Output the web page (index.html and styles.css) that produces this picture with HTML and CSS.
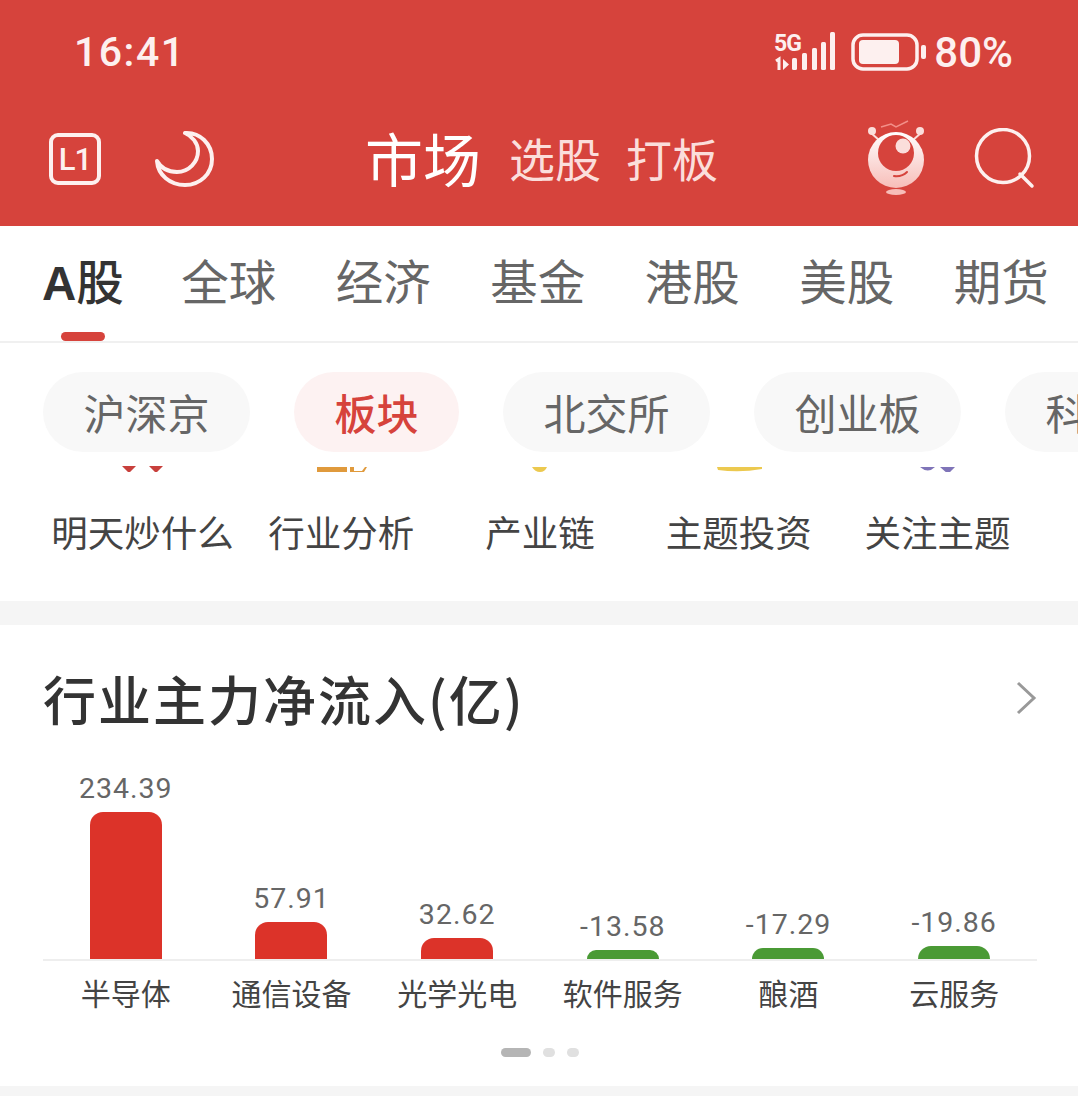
FILE: index.html
```html
<!DOCTYPE html>
<html lang="zh-CN">
<head>
    <meta charset="UTF-8">
    <meta name="viewport" content="width=device-width, initial-scale=1.0">
    <title>市场</title>
    <link rel="stylesheet" href="styles.css">
</head>
<body>
    <main id="app">
        <header id="top">
            <section id="status">
                <p class="clock">16:41</p>
                <div class="status-right">
                    <svg class="signal" width="64" height="40" viewBox="0 0 64 40">
                        <text x="0" y="19" class="net">5G</text>
                        <path d="M2 29l3-2v11" class="updown"/>
                        <path d="M9 27l6 5.500-6 5.500z"/>
                        <rect x="18" y="26" width="5" height="12" rx="1.500"/>
                        <rect x="28" y="21" width="5" height="17" rx="1.500"/>
                        <rect x="38" y="16" width="5" height="22" rx="1.500"/>
                        <rect x="47" y="10" width="5" height="28" rx="1.500"/>
                        <rect x="56" y="0" width="5" height="38" rx="1.500"/>
                    </svg>
                    <svg class="battery" width="76" height="38" viewBox="0 0 76 38">
                        <rect x="2" y="2" width="64" height="34" rx="10" class="shell"/>
                        <rect x="8" y="7" width="40" height="24" rx="4"/>
                        <rect x="70" y="12" width="5" height="14" rx="2"/>
                    </svg>
                    <p class="percent">80%</p>
                </div>
            </section>
            <nav id="bar">
                <svg class="icon-level" width="52" height="52" viewBox="0 0 52 52">
                    <rect x="2" y="2" width="48" height="48" rx="7"/>
                    <text x="26" y="37" class="level">L1</text>
                </svg>
                <svg class="icon-moon" width="60" height="58" viewBox="0 0 60 58">
                    <path d="M30 3C45 2 57 14 57 29C57 44 45 55 30 55C15 55 3 45 2 31C6 38 13 42 22 42C34 42 43 32 43 21C43 13 37 6 30 3Z"/>
                </svg>
                <div class="titles">
                    <span class="title-main">市场</span>
                    <span class="title-sub">选股</span>
                    <span class="title-sub">打板</span>
                </div>
                <svg class="icon-robot" width="60" height="70" viewBox="0 0 60 70">
                    <defs>
                        <linearGradient id="face" x1="0" y1="0" x2="0" y2="1">
                            <stop offset="0" stop-color="#fff"/>
                            <stop offset="1" stop-color="#f7bdb8"/>
                        </linearGradient>
                    </defs>
                    <path d="M3 8l10 9M55 8l-10 9" class="antenna"/>
                    <circle cx="5" cy="7" r="4" class="knob"/>
                    <circle cx="53" cy="7" r="4" class="knob"/>
                    <path d="M14 3l10-3 5 3 12-6" class="squiggle"/>
                    <circle cx="29" cy="36" r="28" fill="url(#face)"/>
                    <circle cx="29" cy="29" r="18" class="eye"/>
                    <circle cx="36" cy="22" r="7.500" class="knob"/>
                    <path d="M27 52q8 1 13-4" class="smile"/>
                    <ellipse cx="29" cy="68" rx="10" ry="3" class="foot"/>
                </svg>
                <svg class="icon-search" width="62" height="62" viewBox="0 0 62 62">
                    <circle cx="29" cy="28" r="26.500"/>
                    <path d="M46 46l12 12"/>
                </svg>
            </nav>
        </header>

        <section id="tabs">
            <a class="tab on"><b>A</b>股</a>
            <a class="tab">全球</a>
            <a class="tab">经济</a>
            <a class="tab">基金</a>
            <a class="tab">港股</a>
            <a class="tab">美股</a>
            <a class="tab">期货</a>
        </section>

        <section id="pills">
            <span class="pill">沪深京</span>
            <span class="pill active">板块</span>
            <span class="pill">北交所</span>
            <span class="pill">创业板</span>
            <span class="pill">科创板</span>
        </section>

        <section id="shortcuts">
            <div class="shortcut">
                <svg width="60" height="20" viewBox="0 0 60 20"><path d="M10 14h14l-7 7zM37 14h14l-7 7z" class="c-red"/></svg>
                <p>明天炒什么</p>
            </div>
            <div class="shortcut">
                <svg width="60" height="20" viewBox="0 0 60 20"><path d="M6 15h30v5H6zM39 15h4v4h8l3-4h2l-3 5H39z" class="c-orange"/></svg>
                <p>行业分析</p>
            </div>
            <div class="shortcut">
                <svg width="60" height="20" viewBox="0 0 60 20"><path d="M22 15h15q-2 5-7 5t-8-5z" class="c-yellow"/></svg>
                <p>产业链</p>
            </div>
            <div class="shortcut">
                <svg width="60" height="20" viewBox="0 0 60 20"><path d="M8 15h45v2q-22 4-44 1z" class="c-yellow"/></svg>
                <p>主题投资</p>
            </div>
            <div class="shortcut">
                <svg width="60" height="20" viewBox="0 0 60 20"><path d="M12 15h15q-7 7-15 0zM32 15h15l-7 7z" class="c-purple"/></svg>
                <p>关注主题</p>
            </div>
        </section>

        <section id="flow">
            <div class="flow-head">
                <h2>行业主力净流入(亿)</h2>
                <svg width="22" height="34" viewBox="0 0 22 34"><path d="M3 2l16 15L3 32"/></svg>
            </div>
            <div class="chart">
                <div class="col"><span class="val">234.39</span><i class="bar up" style="height:147px"></i></div>
                <div class="col"><span class="val">57.91</span><i class="bar up" style="height:37px"></i></div>
                <div class="col"><span class="val">32.62</span><i class="bar up" style="height:21px"></i></div>
                <div class="col"><span class="val">-13.58</span><i class="bar down" style="height:9px"></i></div>
                <div class="col"><span class="val">-17.29</span><i class="bar down" style="height:11px"></i></div>
                <div class="col"><span class="val">-19.86</span><i class="bar down" style="height:13px"></i></div>
            </div>
            <div class="names">
                <span>半导体</span>
                <span>通信设备</span>
                <span>光学光电</span>
                <span>软件服务</span>
                <span>酿酒</span>
                <span>云服务</span>
            </div>
            <div class="dots">
                <i class="dot long"></i>
                <i class="dot"></i>
                <i class="dot"></i>
            </div>
        </section>
    </main>
</body>
</html>
```
FILE: styles.css
```css
body{
    margin: 0;
    padding: 0;
    background-color: #f5f5f5;
    overflow: hidden;
}

p, h2{
    margin: 0;
}

#app{
    width: 1078px;
    height: 1096px;
    overflow: hidden;
    font-family: "Noto Sans CJK SC", sans-serif;
}

#top{
    height: 226px;
    background-color: #d6433c;
    color: #fff;
}

#status{
    height: 104px;
    padding: 0 65px 0 74px;
    display: flex;
    justify-content: space-between;
    align-items: center;
    font-family: Roboto, sans-serif;
    font-weight: 500;
    color: #fdf0ef;
}

.clock{
    font-size: 41px;
    letter-spacing: 1.500px;
}

.status-right{
    display: flex;
    align-items: center;
}

.percent{
    font-size: 42px;
    margin-left: 7px;
}

.signal{
    fill: #fdf0ef;
    margin-right: 13px;
    overflow: visible;
}

.net{
    font-family: Roboto, sans-serif;
    font-size: 23px;
    font-weight: 700;
    letter-spacing: -1px;
}

.updown{
    fill: none;
    stroke: #fdf0ef;
    stroke-width: 3;
}

.battery{
    fill: #fdf0ef;
}

.shell{
    fill: none;
    stroke: #fdf0ef;
    stroke-width: 3.500;
}

#bar{
    height: 110px;
    display: flex;
    align-items: center;
    padding-left: 49px;
}

.icon-level{
    overflow: visible;
}

.icon-level rect{
    fill: none;
    stroke: #fdf0ef;
    stroke-width: 4;
}

.level{
    font-family: Roboto, sans-serif;
    font-size: 31px;
    font-weight: 500;
    letter-spacing: -1px;
    fill: #fdf0ef;
    text-anchor: middle;
}

.icon-moon{
    margin-left: 54px;
    fill: none;
    stroke: #fdf0ef;
    stroke-width: 4;
    stroke-linejoin: round;
}

.titles{
    margin: 0 0 4px 150px;
    display: flex;
    align-items: center;
    width: 502px;
    gap: 25px;
}

.title-main{
    margin-right: 3px;
    font-size: 58px;
    line-height: 70px;
}

.title-sub{
    font-size: 46px;
    line-height: 70px;
    color: #fbdedb;
}

.antenna{
    fill: none;
    stroke: #fbdedb;
    stroke-width: 2;
}

.squiggle{
    fill: none;
    stroke: #f28f88;
    stroke-width: 1.500;
}

.knob{
    fill: #fbdedb;
}

.eye{
    fill: #d6433c;
}

.smile{
    fill: none;
    stroke: #d6433c;
    stroke-width: 2;
    stroke-linecap: round;
}

.foot{
    fill: #f7bdb8;
}

.icon-robot{
    overflow: visible;
}

.icon-search{
    margin-left: 47px;
    fill: none;
    stroke: #fdf0ef;
    stroke-width: 3.500;
    stroke-linecap: round;
}

#tabs{
    height: 115px;
    background-color: #fff;
    border-bottom: 2px solid #f0f0f0;
    padding-left: 42px;
    display: flex;
    gap: 59.500px;
    font-size: 47.500px;
    line-height: 108px;
    color: #666;
}

.tab{
    position: relative;
}

.tab.on{
    margin-right: -2px;
    color: #333;
    font-weight: 500;
}

.tab.on b{
    font-family: "Liberation Sans", sans-serif;
    font-weight: 700;
}

.tab.on::after{
    content: "";
    position: absolute;
    left: 19px;
    bottom: 0;
    width: 44px;
    height: 9px;
    border-radius: 5px;
    background-color: #d6433c;
}

#pills{
    background-color: #fff;
    padding: 29px 0 0 43px;
    display: flex;
    gap: 44px;
    overflow: hidden;
}

.pill{
    flex-shrink: 0;
    height: 80px;
    padding: 0 40.500px;
    border-radius: 40px;
    background-color: #f8f8f8;
    font-size: 42px;
    line-height: 80px;
    color: #666;
}

.pill.active{
    background-color: #fdf2f2;
    color: #d6433c;
    font-weight: 500;
}

#shortcuts{
    background-color: #fff;
    height: 149px;
    padding: 0 41px 0 43px;
    display: grid;
    grid-template-columns: repeat(5, 1fr);
    text-align: center;
    font-size: 36.500px;
    color: #444;
}

.shortcut svg{
    display: block;
    margin: 0 auto;
}

.shortcut p{
    margin-top: 34px;
    line-height: 52px;
}

.c-red{
    fill: #c8403c;
}

.c-orange{
    fill: #e09a3c;
}

.c-yellow{
    fill: #ecc94f;
}

.c-purple{
    fill: #7f74b8;
}

#flow{
    margin-top: 24px;
    height: 461px;
    background-color: #fff;
    padding: 0 41px 0 43px;
}

.flow-head{
    height: 146px;
    display: flex;
    justify-content: space-between;
    align-items: center;
}

.flow-head h2{
    font-size: 53px;
    font-weight: 500;
    color: #333;
    letter-spacing: 2px;
    line-height: 142px;
}

.flow-head svg{
    fill: none;
    stroke: #999;
    stroke-width: 3;
}

.chart{
    height: 188px;
    display: grid;
    grid-template-columns: repeat(6, 1fr);
    border-bottom: 2px solid #eee;
}

.col{
    display: flex;
    flex-direction: column;
    justify-content: flex-end;
    align-items: center;
}

.val{
    font-family: Roboto, sans-serif;
    font-size: 28.500px;
    line-height: 34px;
    letter-spacing: 1px;
    color: #666;
    margin-bottom: 6px;
}

.bar{
    display: block;
    width: 72px;
    border-radius: 13px 13px 0 0;
}

.up{
    background-color: #dc3329;
}

.down{
    background-color: #4a9a35;
}

.names{
    display: grid;
    grid-template-columns: repeat(6, 1fr);
    text-align: center;
    font-size: 30px;
    line-height: 63px;
    color: #444;
}

.dots{
    margin-top: 24px;
    display: flex;
    justify-content: center;
    gap: 12px;
    padding-right: 0;
}

.dot{
    width: 12px;
    height: 9px;
    border-radius: 5px;
    background-color: #e0e0e0;
}

.dot.long{
    width: 30px;
    background-color: #b5b5b5;
}
```
